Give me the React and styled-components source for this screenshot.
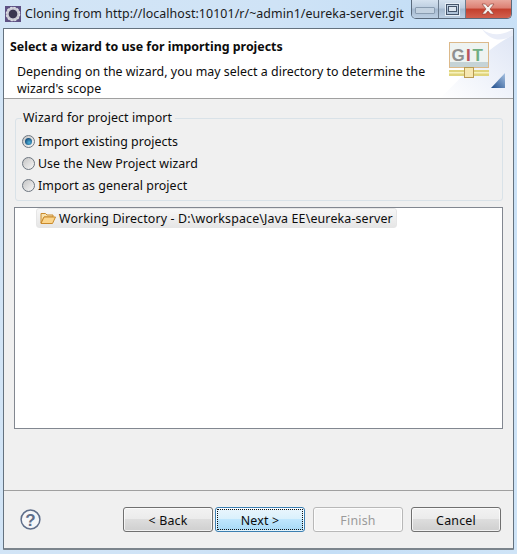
import React from 'react';
import styled, { createGlobalStyle } from 'styled-components';

const GlobalStyle = createGlobalStyle`
  html, body {
    margin: 0;
    padding: 0;
    background: #b9d7f3;
  }
  * {
    box-sizing: border-box;
  }
`;

const Frame = styled.div`
  width: 517px;
  height: 554px;
  padding: 0 3px 4px 3px;
  display: flex;
  flex-direction: column;
  overflow: hidden;
  font-family: "Noto Sans", "Open Sans", sans-serif;
  font-size: 12.4px;
  color: #0c0c0c;
  background: linear-gradient(100deg, #d3e5f6 0%, #cfe3f6 45%, #c4def6 70%, #cfe4f7 100%);
`;

const TitleBar = styled.div`
  height: 28px;
  flex: none;
  display: flex;
  align-items: flex-start;
`;

const AppIcon = styled.svg`
  width: 16px;
  height: 16px;
  margin: 6px 0 0 2px;
  flex: none;
`;

const TitleText = styled.div`
  margin: 5px 0 0 4px;
  line-height: 18px;
  letter-spacing: 0.07px;
  color: #1a1a1a;
  white-space: nowrap;
  flex: 1;
`;

const WindowControls = styled.div`
  display: flex;
  height: 19px;
  width: 101px;
  margin-right: 2px;
  border: 1px solid #5a6a7c;
  border-top: none;
  border-radius: 0 0 5px 5px;
  overflow: hidden;
`;

const ControlButton = styled.div`
  width: ${(props) => props.$width}px;
  display: flex;
  align-items: center;
  justify-content: center;
  border-right: ${(props) => (props.$last ? 'none' : '1px solid #6c7c8e')};
  background: ${(props) =>
    props.$close
      ? 'linear-gradient(#e8a79c 0%, #dc7f72 45%, #c33f2d 50%, #d2604e 100%)'
      : 'linear-gradient(#d5e2ef 0%, #bccde0 45%, #a5b9cf 50%, #bccfe3 100%)'};
`;

const MinGlyph = styled.div`
  width: 20px;
  height: 7px;
  margin-top: 3px;
  border: 1px solid #8a9db1;
  background: #c3d2e1;
  border-radius: 1px;
`;

const MaxGlyph = styled.div`
  width: 13px;
  height: 11px;
  border: 1px solid #44546a;
  outline: 1px solid #e5edf5;
  display: flex;
  align-items: center;
  justify-content: center;
  &::after {
    content: '';
    width: 7px;
    height: 4px;
    border: 1px solid #44546a;
    background: #dbe5ef;
  }
`;

const Client = styled.div`
  flex: 1;
  display: flex;
  flex-direction: column;
  border: 1px solid #64727f;
  border-bottom: 2px solid #7b848c;
  border-radius: 1px;
  background: #f0f0f0;
  min-height: 0;
`;

const Banner = styled.div`
  height: 69px;
  flex: none;
  display: flex;
  background: #fff;
`;

const BannerText = styled.div`
  flex: 1;
  padding: 9px 0 0 6px;
`;

const BannerTitle = styled.div`
  font-weight: 700;
  line-height: 18px;
`;

const BannerDesc = styled.div`
  margin: 7px 0 0 7px;
  width: 420px;
  line-height: 17px;
  letter-spacing: 0.03px;
`;

const BannerArt = styled.svg`
  width: 75px;
  height: 69px;
  flex: none;
`;

const Rule = styled.div`
  height: 1px;
  flex: none;
  background: #a0a0a0;
`;

const Body = styled.div`
  flex: 1;
  min-height: 0;
  display: flex;
  flex-direction: column;
  padding: 13px 10px 61px 10px;
`;

const Group = styled.fieldset`
  margin: 0 0 6px 1px;
  padding: 6px 0 0 6px;
  height: 89px;
  flex: none;
  border: 1px solid #d9e2e8;
  border-radius: 3px;
  display: flex;
  flex-direction: column;
`;

const Legend = styled.legend`
  padding: 0 3px 0 1px;
  line-height: 12px;
  height: 12px;
  letter-spacing: 0.1px;
  overflow: visible;
`;

const RadioRow = styled.div`
  height: 22px;
  flex: none;
  display: flex;
  align-items: center;
  gap: 3px;
  letter-spacing: 0.05px;
`;

const RadioDot = styled.div`
  width: 13px;
  height: 13px;
  border-radius: 50%;
  flex: none;
  border: 1px solid #6d7680;
  display: flex;
  align-items: center;
  justify-content: center;
  background: linear-gradient(135deg, #c4c4c4, #f7f7f7);
  &::after {
    content: '';
    width: 7px;
    height: 7px;
    border-radius: 50%;
    display: ${(props) => (props.$checked ? 'block' : 'none')};
    background: radial-gradient(circle at 60% 65%, #4fb4de, #164f7d 70%);
  }
`;

const ProjectList = styled.div`
  flex: 1;
  min-height: 0;
  background: #fff;
  border: 1px solid #828790;
  padding: 0 0 0 21px;
`;

const TreeItem = styled.div`
  display: flex;
  align-items: center;
  height: 20px;
  width: 361px;
  padding-left: 3px;
  gap: 3px;
  white-space: nowrap;
  letter-spacing: 0.15px;
  border: 1px solid #e6e6e6;
  border-radius: 3px;
  background: linear-gradient(#f7f7f7, #e6e6e6);
`;

const FolderIcon = styled.svg`
  width: 16px;
  height: 14px;
  flex: none;
`;

const Footer = styled.div`
  height: 58px;
  flex: none;
  border-top: 1px solid #a0a0a0;
  display: flex;
  padding: 17px 0 0 16px;
`;

const HelpIcon = styled.svg`
  width: 21px;
  height: 21px;
  flex: none;
  margin: 1px 82px 0 0;
`;

const ButtonRow = styled.div`
  display: flex;
  margin-top: -1px;
`;

const WizardButton = styled.div`
  width: 90px;
  height: 25px;
  margin-right: ${(props) => props.$gap || 0}px;
  padding-top: 1px;
  display: flex;
  align-items: center;
  justify-content: center;
  letter-spacing: 0.2px;
  border-radius: 3px;
  border: 1px solid ${(props) => (props.$disabled ? '#b8b8b8' : props.$focused ? '#3c7fb1' : '#707070')};
  color: ${(props) => (props.$disabled ? '#9a9a9a' : '#0c0c0c')};
  background: ${(props) =>
    props.$disabled
      ? '#f4f4f4'
      : props.$focused
        ? 'linear-gradient(#eaf6fd 0%, #d9f0fc 50%, #bee6fd 50%, #a7d9f5 100%)'
        : 'linear-gradient(#f2f2f2 0%, #ebebeb 50%, #dddddd 50%, #cfcfcf 100%)'};
  box-shadow: inset 0 0 0 1px rgba(255, 255, 255, 0.7);
`;

const FocusLabel = styled.div`
  width: 86px;
  height: 21px;
  margin-top: -1px;
  padding-top: 1px;
  display: flex;
  align-items: center;
  justify-content: center;
  outline: 1px dotted #111;
  outline-offset: -1px;
`;

function Radio({ checked, label }) {
  return (
    <RadioRow>
      <RadioDot $checked={checked} />
      <span>{label}</span>
    </RadioRow>
  );
}

export default function App() {
  return (
    <>
      <GlobalStyle />
      <Frame>
        <TitleBar>
          <AppIcon viewBox="0 0 16 16">
            <rect width="16" height="16" fill="#5d5183" />
            <circle cx="8" cy="8" r="5.6" fill="none" stroke="#c9c9d2" strokeWidth="2.6" />
            <circle cx="8" cy="8" r="6.6" fill="none" stroke="#dcdce4" strokeWidth="1.4" strokeDasharray="2 1.5" />
            <circle cx="8" cy="8" r="4.2" fill="#3a3550" />
          </AppIcon>
          <TitleText>Cloning from http://localhost:10101/r/~admin1/eureka-server.git</TitleText>
          <WindowControls>
            <ControlButton $width={28}><MinGlyph /></ControlButton>
            <ControlButton $width={27}><MaxGlyph /></ControlButton>
            <ControlButton $width={46} $close $last>
              <svg width="16" height="12" viewBox="0 0 16 12">
                <path d="M2 1 L5.5 1 L8 4 L10.5 1 L14 1 L10 6 L14 11 L10.5 11 L8 8 L5.5 11 L2 11 L6 6 Z" fill="#f4f1ee" stroke="#8a3a30" strokeWidth="0.6" />
              </svg>
            </ControlButton>
          </WindowControls>
        </TitleBar>
        <Client>
          <Banner>
            <BannerText>
              <BannerTitle>Select a wizard to use for importing projects</BannerTitle>
              <BannerDesc>Depending on the wizard, you may select a directory to determine the wizard's scope</BannerDesc>
            </BannerText>
            <BannerArt viewBox="0 0 75 69">
              <defs>
                <linearGradient id="wash" x1="0" y1="1" x2="1" y2="0">
                  <stop offset="0" stopColor="#ffffff" />
                  <stop offset="1" stopColor="#dfe6f5" />
                </linearGradient>
                <linearGradient id="corner" x1="0" y1="1" x2="1" y2="0">
                  <stop offset="0" stopColor="#1f4d8c" />
                  <stop offset="1" stopColor="#a9c4e4" />
                </linearGradient>
              </defs>
              <path d="M2 69 C24 50 44 22 75 6 L75 69 Z" fill="url(#wash)" />
              <path d="M44 0 C54 8 66 6 75 0 L75 6 C66 12 54 14 44 0 Z" fill="#e9edf8" />
              <rect x="11.5" y="13.5" width="39" height="25" fill="#eef3f1" stroke="#dcb98a" />
              <rect x="12" y="33" width="38" height="5" fill="#c5d3d6" />
              <text x="13.5" y="32" fontFamily="Liberation Sans, sans-serif" fontWeight="700" fontSize="17" fill="#8f8f8f">G</text>
              <text x="28" y="32" fontFamily="Liberation Sans, sans-serif" fontWeight="700" fontSize="17" fill="#b8525c">I</text>
              <text x="34.5" y="32" fontFamily="Liberation Sans, sans-serif" fontWeight="700" fontSize="17" fill="#6fae82">T</text>
              <rect x="11" y="41" width="40" height="6" fill="#e0d47c" />
              <rect x="11" y="43" width="40" height="1.5" fill="#f7f2bd" />
              <rect x="26.5" y="38.5" width="9" height="10" fill="#f6e7b0" stroke="#b99a52" />
              <path d="M53 59 L67 44 L67 59 Z" fill="url(#corner)" />
            </BannerArt>
          </Banner>
          <Rule />
          <Body>
            <Group>
              <Legend>Wizard for project import</Legend>
              <Radio checked label="Import existing projects" />
              <Radio label="Use the New Project wizard" />
              <Radio label="Import as general project" />
            </Group>
            <ProjectList>
              <TreeItem>
                <FolderIcon viewBox="0 0 16 14">
                  <path d="M1 12 V2.5 H5.5 L7 4 H13 V6 H4 L1 12 Z" fill="#f7e1ae" stroke="#c98a2c" />
                  <path d="M1 12.5 L4 6 H15.5 L12.5 12.5 Z" fill="#fbd58c" stroke="#c98a2c" />
                </FolderIcon>
                <span>Working Directory - D:\workspace\Java EE\eureka-server</span>
              </TreeItem>
            </ProjectList>
          </Body>
          <Footer>
            <HelpIcon viewBox="0 0 21 21">
              <circle cx="10.5" cy="10.5" r="9.4" fill="#f5f6f8" stroke="#5f6e8a" strokeWidth="1.5" />
              <text x="10.5" y="16.5" textAnchor="middle" fontFamily="Liberation Sans, sans-serif" fontWeight="700" fontSize="17" fill="#5f6e8a">?</text>
            </HelpIcon>
            <ButtonRow>
              <WizardButton $gap={2}>&lt; Back</WizardButton>
              <WizardButton $focused $gap={8}><FocusLabel>Next &gt;</FocusLabel></WizardButton>
              <WizardButton $disabled $gap={8}>Finish</WizardButton>
              <WizardButton>Cancel</WizardButton>
            </ButtonRow>
          </Footer>
        </Client>
      </Frame>
    </>
  );
}
